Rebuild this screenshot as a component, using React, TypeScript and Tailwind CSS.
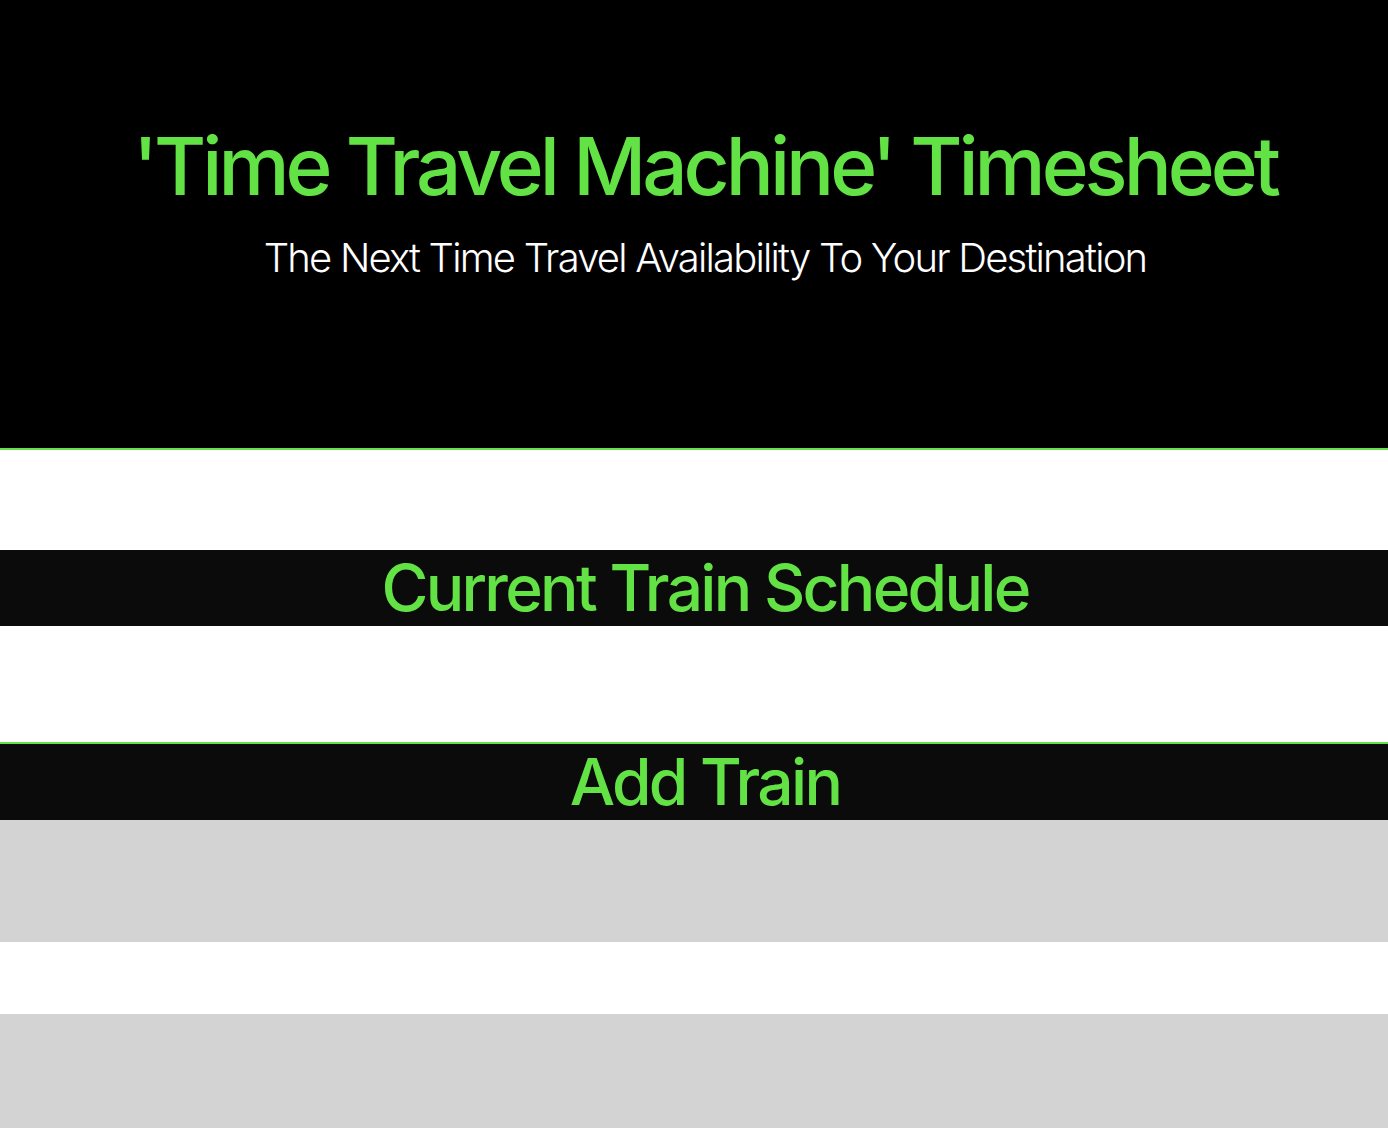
export default function App() {
  return (
    <div className="min-h-screen bg-white font-['Inter',sans-serif]">
      <header className="h-[450px] border-b-2 border-[#63e245] bg-black pt-[118px] pl-[22px] text-center">
        <h1 className="text-[80px] font-medium leading-[96px] tracking-[-0.05em] text-[#63e245]">
          'Time Travel Machine' Timesheet
        </h1>
        <p className="mt-[20px] text-[40px] font-light leading-[48px] tracking-[-0.045em] text-white">
          The Next Time Travel Availability To Your Destination
        </p>
      </header>

      <section className="pt-[100px]">
        <h2 className="bg-[#0b0b0b] pl-[22px] text-center text-[64px] font-medium leading-[76px] tracking-[-0.042em] text-[#63e245]">
          Current Train Schedule
        </h2>
        <div className="h-[116px]" />
      </section>

      <section className="border-t-2 border-[#63e245]">
        <h2 className="bg-[#0b0b0b] pl-[22px] text-center text-[64px] font-medium leading-[76px] tracking-[-0.042em] text-[#63e245]">
          Add Train
        </h2>
        <div className="h-[122px] bg-[#d3d3d3]" />
        <div className="h-[72px]" />
        <div className="h-[122px] bg-[#d3d3d3]" />
      </section>
    </div>
  );
}
